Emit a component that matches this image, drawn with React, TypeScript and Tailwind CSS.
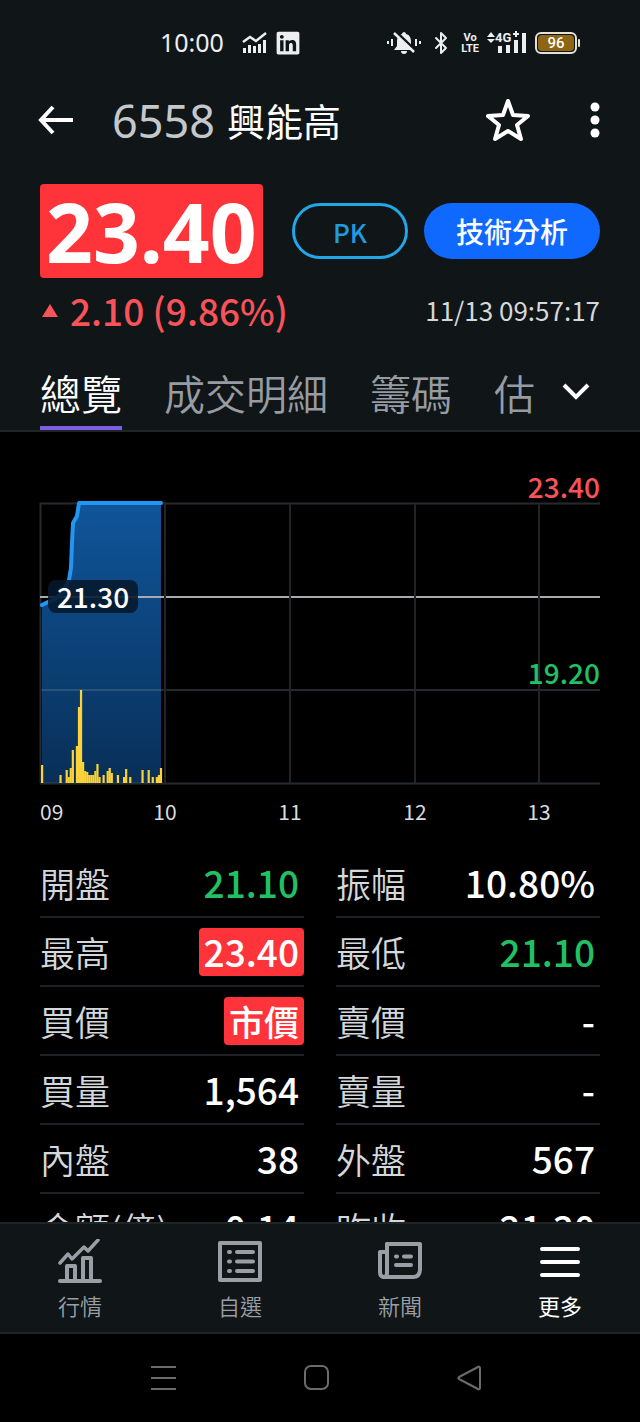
import { useState } from "react";
import { Bluetooth } from "lucide-react";
import { FaLinkedin } from "react-icons/fa";
import clsx from "clsx";

type Tone = "plain" | "down" | "limit";

interface Quote {
    label: string;
    value: string;
    tone?: Tone;
}

const QUOTES: Quote[] = [
    { label: "開盤", value: "21.10", tone: "down" },
    { label: "振幅", value: "10.80%" },
    { label: "最高", value: "23.40", tone: "limit" },
    { label: "最低", value: "21.10", tone: "down" },
    { label: "買價", value: "市價", tone: "limit" },
    { label: "賣價", value: "-" },
    { label: "買量", value: "1,564" },
    { label: "賣量", value: "-" },
    { label: "內盤", value: "38" },
    { label: "外盤", value: "567" },
    { label: "金額(億)", value: "0.14" },
    { label: "昨收", value: "21.30" },
];

const TABS = ["總覽", "成交明細", "籌碼", "估"];

// [minute after open, bar height]
const VOLUME = [
    [0, 18], [9, 8], [12, 13], [13, 6], [14, 15], [15, 33], [17, 37], [18, 76], [19, 93],
    [20, 21], [21, 12], [22, 11], [23, 8], [24, 8], [25, 8], [26, 12], [27, 19], [28, 6],
    [30, 8], [32, 12], [33, 15], [34, 10], [37, 8], [40, 6], [41, 14], [43, 6], [49, 13],
    [52, 13], [54, 6], [56, 6], [57, 8], [58, 15],
];

const HOURS = [
    { label: "10", x: 125 },
    { label: "11", x: 250 },
    { label: "12", x: 375 },
    { label: "13", x: 499 },
];

const PRICE_LINE = "2,135 8,132 15,129 23,122 29,110 31,98 32,73 33,53 37,46 39,33 121,33";

function StatusBar() {
    return (
        <div className="flex h-[86px] items-center pl-40 pr-[60px] text-[#eceef0]">
            <span className="font-['Noto_Sans'] text-[25px]">10:00</span>
            <svg className="ml-[18px] h-[22px] w-[25px]" viewBox="0 0 25 22" fill="none" stroke="currentColor">
                <path d="M1 10 8 5l6 4L24 1" strokeWidth="2.5" />
                <path d="M2.500 21v-5M7.500 21v-8M12.500 21v-7M17.500 21v-9M22.500 21V8" strokeWidth="3" />
            </svg>
            <FaLinkedin className="ml-2 h-[26px] w-[26px]" />
            <div className="ml-auto flex items-center gap-2">
                <svg className="h-6 w-[34px]" viewBox="0 0 34 24" fill="none" stroke="currentColor">
                    <path d="M17 1c1 0 2 1 2 2 4 1 5 4 5 8v4l3 4H7l3-4v-4c0-4 1-7 5-8 0-1 1-2 2-2Z" fill="currentColor" stroke="none" />
                    <path d="M14 20h6a3 3 0 0 1-6 0Z" fill="currentColor" stroke="none" />
                    <path d="M9 1 29 20" stroke="#101518" strokeWidth="3" />
                    <path d="M7 2 27 21" strokeWidth="2.5" />
                    <path d="M1 10v3M5 8v7M29 8v7M33 10v3" strokeWidth="2" />
                </svg>
                <Bluetooth size={24} strokeWidth={2} />
                <div className="flex flex-col items-center font-['Roboto'] text-[11px] leading-[11px] font-bold">
                    <span>Vo</span>
                    <span>LTE</span>
                </div>
                <svg className="h-[26px] w-10" viewBox="0 0 40 26" fill="currentColor">
                    <path d="m4 2 4 5H0ZM4 13l4-4H0Z" />
                    <path d="M11 16h4v7h-4zM19 15h4v8h-4zM27 10h4v13h-4zM35 3h4v20h-4z" />
                    <text x="8" y="12" className="font-['Roboto'] text-[13px] font-bold">4G</text>
                    <path d="M28 1h2v2h2v2h-2v2h-2V5h-2V3h2z" />
                </svg>
                <div className="flex items-center gap-px">
                    <div className="flex h-[22px] w-[42px] items-center justify-center rounded-md border-2 border-[#e4e0d6] p-px">
                        <span className="flex h-full w-full items-center justify-center rounded-sm bg-[#8d6513] font-['Roboto'] text-[15px] leading-none font-medium text-white">96</span>
                    </div>
                    <span className="h-2 w-0.5 rounded-full bg-[#e4e0d6]" />
                </div>
            </div>
        </div>
    );
}

function PriceChart() {
    return (
        <svg viewBox="0 0 560 360" className="block w-full overflow-visible" role="img" aria-label="走勢圖">
            <defs>
                <linearGradient id="area" x1="0" y1="0" x2="0" y2="1">
                    <stop offset="0" stopColor="#10559a" />
                    <stop offset="1" stopColor="#082f57" />
                </linearGradient>
            </defs>
            <polygon points={`2,313 ${PRICE_LINE} 121,313`} fill="url(#area)" />
            <path d="M0 33.500H560M0 220H560M0 313.500H560M.5 33V313" fill="none" stroke="#7d8a9a" strokeOpacity=".3" strokeWidth="2" />
            <path d="M0 127H560" stroke="#a7abb0" strokeWidth="2" />
            {HOURS.map((h) => (
                <path key={h.label} d={`M${h.x} 34V313`} stroke="#222528" strokeWidth="2" />
            ))}
            <polyline points={PRICE_LINE} fill="none" stroke="#2196f3" strokeWidth="4" strokeLinecap="round" strokeLinejoin="round" />
            {VOLUME.map(([minute, height]) => (
                <rect key={minute} x={1 + minute * 2.05} y={313 - height} width="2.2" height={height} fill="#fbd338" />
            ))}
            <rect x="8" y="110" width="90" height="33" rx="8" fill="#06182b" fillOpacity=".88" />
            <g className="font-['Noto_Sans_CJK_TC'] text-[28px] font-medium">
                <text x="53" y="138" textAnchor="middle" fill="#fff">21.30</text>
                <text x="560" y="28" textAnchor="end" fill="#f75358">23.40</text>
                <text x="560" y="214" textAnchor="end" fill="#21c063">19.20</text>
            </g>
            <g className="font-['Noto_Sans_CJK_TC'] text-[21px]" fill="#d9dcdf">
                <text x="0" y="350">09</text>
                {HOURS.map((h) => (
                    <text key={h.label} x={h.x} y="350" textAnchor="middle">{h.label}</text>
                ))}
            </g>
        </svg>
    );
}

function QuoteRow({ label, value, tone = "plain" }: Quote) {
    // numerals are set slightly larger than the CJK text beside them
    const numeric = /[\d-]/.test(value);

    return (
        <div className="flex h-[69px] items-center justify-between border-b-2 border-[#1f2225]">
            <dt className="text-[35px] leading-none font-[350] text-[#d5d8db]">{label}</dt>
            <dd
                className={clsx(
                    "flex h-12 items-center rounded px-[5px] leading-none font-medium",
                    numeric ? "text-[37px]" : "text-[35px]",
                    tone === "plain" && "text-white",
                    tone === "down" && "text-[#21c063]",
                    tone === "limit" && "bg-[#ff333a] text-white"
                )}
            >
                {value}
            </dd>
        </div>
    );
}

function MarketIcon() {
    return (
        <svg className="size-11" viewBox="0 0 44 44" fill="none" stroke="currentColor" strokeWidth="4" strokeLinecap="round" strokeLinejoin="round">
            <path d="M2 42h40" />
            <path d="M9 41V27h8v14M25 41V19h8v22" />
            <path d="M2 24 10 15l4 5L26 8l4 4L40 1" strokeWidth="3.500" />
        </svg>
    );
}

function WatchlistIcon() {
    return (
        <svg className="size-11" viewBox="0 0 44 44" fill="none" stroke="currentColor" strokeWidth="4" strokeLinecap="round">
            <rect x="2" y="4" width="40" height="37" strokeLinejoin="round" />
            <path d="M11 13h1M11 22.500h1M11 32h1M19 13h16M19 22.500h16M19 32h16" />
        </svg>
    );
}

function NewsIcon() {
    return (
        <svg className="size-11" viewBox="0 0 44 44" fill="none" stroke="currentColor" strokeWidth="4" strokeLinecap="round" strokeLinejoin="round">
            <path d="M9 5h33v25c0 6-3 8-7 8H6c-3 0-4-2-4-5V13h7" />
            <path d="M9 5v29c0 3-1 4-3 4" />
            <path d="M18 17.500h1M26 17.500h7M18 26h15" />
        </svg>
    );
}

function MoreIcon() {
    return (
        <svg className="size-11" viewBox="0 0 44 44" stroke="currentColor" strokeWidth="4" strokeLinecap="round">
            <path d="M4 10h36M4 23h36M4 36h36" />
        </svg>
    );
}

const NAV = [
    { label: "行情", Icon: MarketIcon },
    { label: "自選", Icon: WatchlistIcon },
    { label: "新聞", Icon: NewsIcon },
    { label: "更多", Icon: MoreIcon },
];

export default function App() {
    const [tab, setTab] = useState("總覽");

    return (
        <div className="flex h-screen flex-col bg-black font-['Noto_Sans_CJK_TC',sans-serif] text-white">
            <header className="shrink-0 border-b-2 border-[#1f2427] bg-[#101518]">
                <StatusBar />

                {/* Title */}
                <div className="flex h-[68px] items-center pl-[38px] pr-[30px]">
                    <button aria-label="返回">
                        <svg className="h-8 w-9" viewBox="0 0 36 32" fill="none" stroke="currentColor" strokeWidth="4">
                            <path d="M15 3 3 16l12 13M3 16h32" />
                        </svg>
                    </button>
                    <h1 className="ml-[38px] flex items-center gap-3">
                        <span className="font-['Noto_Sans'] text-[45px] leading-none text-[#c4c8cb]">6558</span>
                        <span className="text-[38px] leading-none">興能高</span>
                    </h1>
                    <button className="ml-auto" aria-label="加入自選">
                        <svg className="size-11" viewBox="0 0 44 44" fill="none" stroke="currentColor" strokeWidth="4" strokeLinejoin="round">
                            <path d="m22 3 5 14 15 1-11 9 4 14-13-8-13 8 4-14L2 18l15-1Z" />
                        </svg>
                    </button>
                    <button className="ml-[50px] px-2.5" aria-label="選單">
                        <svg className="h-9 w-2.5" viewBox="0 0 10 36" fill="currentColor">
                            <circle cx="5" cy="5" r="4.500" />
                            <circle cx="5" cy="18" r="4.500" />
                            <circle cx="5" cy="31" r="4.500" />
                        </svg>
                    </button>
                </div>

                {/* Price */}
                <div className="flex items-center justify-between px-10 pt-[30px]">
                    <div className="flex h-[94px] items-center rounded bg-[#ff333a] px-1.5 font-['Noto_Sans'] text-[82px] leading-none font-bold">23.40</div>
                    <div className="flex gap-4">
                        <button className="h-14 w-[116px] rounded-full border-3 border-[#23a6e8] text-[26px] font-medium text-[#1f9be0]">PK</button>
                        <button className="h-14 w-44 rounded-full bg-[#0f69ff] text-[28px] font-medium">技術分析</button>
                    </div>
                </div>
                <div className="flex h-16 items-center justify-between px-10">
                    <div className="flex items-center gap-2.5 text-[37px] leading-none font-medium text-[#f75358]">
                        <svg className="h-3.5 w-5" viewBox="0 0 20 14" fill="currentColor">
                            <path d="m10 1 8 13H2Z" />
                        </svg>
                        <span>2.10 (9.86%)</span>
                    </div>
                    <time className="text-[26px] leading-none text-[#d5d8db]">11/13 09:57:17</time>
                </div>

                {/* Tabs */}
                <div className="flex h-[88px] items-stretch pl-10 pr-[50px]">
                    <div className="flex min-w-0 flex-1 gap-[42px] overflow-hidden whitespace-nowrap" role="tablist">
                        {TABS.map((name) => (
                            <button
                                key={name}
                                role="tab"
                                aria-selected={tab === name}
                                onClick={() => setTab(name)}
                                className={clsx(
                                    "shrink-0 border-b-4 pt-4 text-[41px] leading-none font-[350]",
                                    tab === name ? "border-[#7d5fe6] text-white" : "border-transparent text-[#979ca3]"
                                )}
                            >
                                {name}
                            </button>
                        ))}
                    </div>
                    <button className="ml-6 pt-3" aria-label="更多分頁">
                        <svg className="h-5 w-7" viewBox="0 0 28 20" fill="none" stroke="currentColor" strokeWidth="4">
                            <path d="m2 3 12 12L26 3" />
                        </svg>
                    </button>
                </div>
            </header>

            {/* Content */}
            <main className="min-h-0 flex-1 overflow-hidden px-10 pt-[38px]">
                <PriceChart />
                <dl className="mt-[19px] grid grid-cols-2 gap-x-8">
                    {QUOTES.map((q) => (
                        <QuoteRow key={q.label} {...q} />
                    ))}
                </dl>
            </main>

            {/* Bottom navigation */}
            <nav className="grid h-28 shrink-0 grid-cols-4 border-y-2 border-[#1f2427] bg-[#101518]">
                {NAV.map(({ label, Icon }) => (
                    <button
                        key={label}
                        className={clsx(
                            "flex flex-col items-center justify-center gap-1 pt-1.5",
                            label === "更多" ? "text-white" : "font-[350] text-[#9a9fa6]"
                        )}
                    >
                        <Icon />
                        <span className="text-[22px] leading-9">{label}</span>
                    </button>
                ))}
            </nav>
            <div className="flex h-[88px] shrink-0 items-center justify-between pl-[149px] pr-[157px] text-[#6b6b6b]">
                <button aria-label="最近">
                    <svg className="size-7" viewBox="0 0 28 28" stroke="currentColor" strokeWidth="2">
                        <path d="M2 3h25M2 14h25M2 25h25" />
                    </svg>
                </button>
                <button aria-label="主畫面">
                    <svg className="size-7" viewBox="0 0 28 28" fill="none" stroke="currentColor" strokeWidth="2">
                        <rect x="3" y="2" width="23" height="23" rx="6" />
                    </svg>
                </button>
                <button aria-label="上一頁">
                    <svg className="size-7" viewBox="0 0 28 28" fill="none" stroke="currentColor" strokeWidth="2" strokeLinejoin="round">
                        <path d="M23 3c1-1 2 0 2 1v20c0 1-1 2-2 1L4 15c-1-1-1-1 0-2Z" />
                    </svg>
                </button>
            </div>
        </div>
    );
}
